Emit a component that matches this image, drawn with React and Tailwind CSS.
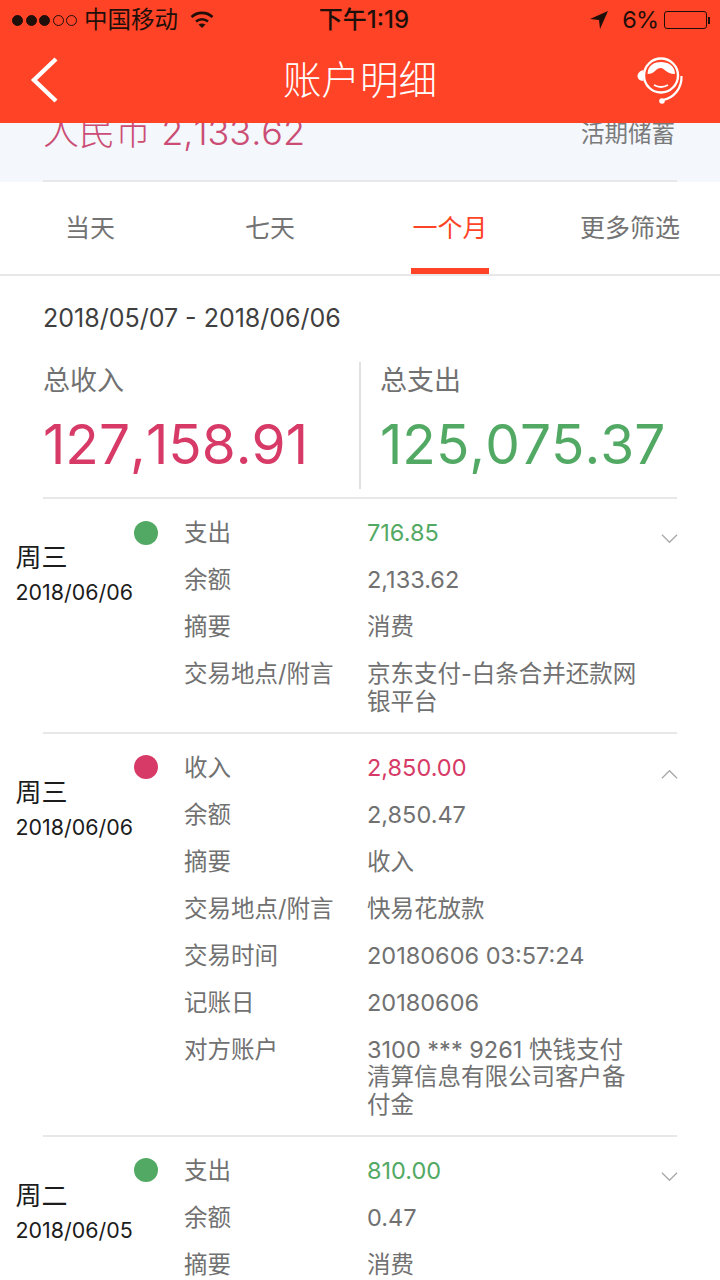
const FONT = "font-['Inter','Noto_Sans_CJK_SC',sans-serif]";

function Chevron({ up }) {
  return (
    <svg width="17" height="10" viewBox="0 0 18 10" className="block" fill="none" stroke="#a8a8a8" strokeWidth="1.3">
      {up ? <path d="M1 9.5 L9 1.5 L17 9.5" /> : <path d="M1 .5 L9 8.5 L17 .5" />}
    </svg>
  );
}

function Row({ day, date, color, rows, up, last }) {
  return (
    <div className={`flex ${last ? "" : "pb-[16.5px]"} pt-[20px]`}>
      <div className="w-[184px] shrink-0 flex pl-[15.5px]">
        <div className="w-[118.5px] shrink-0 mt-[22px] text-[#1c1c1c]">
          <div className="text-[26px] leading-[34px]">{day}</div>
          <div className="text-[21.4px] leading-[34px] whitespace-nowrap">{date}</div>
        </div>
        <div className="w-6 h-6 rounded-full mt-[1.5px]" style={{ background: color === "g" ? "#52a964" : "#d73a66" }} />
      </div>
      <div className="flex-1 flex flex-col gap-[19.5px]">
        {rows.map(([k, v, hl], i) => (
          <div key={i} className="flex text-[23.5px] leading-[27.5px] text-[#717171]">
            <div className="w-[183px] shrink-0 whitespace-nowrap">{k}</div>
            <div className={`w-[274px] ${hl ? (color === "g" ? "text-[#52a964]" : "text-[#d73a66]") : ""}`}>{v}</div>
          </div>
        ))}
      </div>
      <div className="w-[59px] shrink-0 pt-[15px]"><Chevron up={up} /></div>
    </div>
  );
}

function Divider() {
  return <div className="mx-[43px] h-0.5 bg-[#e8e8e8]" />;
}

export default function App() {
  return (
    <div className={`w-[720px] h-[1280px] overflow-hidden bg-white ${FONT}`}>
      <div className="h-[123px] bg-[#ff4326]">
        <div className="h-10 flex items-center text-[#1f0f0a] text-[23.5px] pl-3 pr-[10px]">
          <div className="flex-1 flex items-center">
            <div className="flex items-center gap-[2.5px]">
              {[1, 1, 1, 0, 0].map((f, i) => (
                <span key={i} className={`w-[11px] h-[11px] rounded-full border border-[#1f0f0a] ${f ? "bg-[#1f0f0a]" : ""}`} />
              ))}
            </div>
            <span className="ml-[7px]">中国移动</span>
            <svg className="ml-[12px]" width="24" height="18" viewBox="0 0 24 18" fill="none" stroke="#1f0f0a" strokeWidth="2.6">
              <path d="M1.5 6 C7.5 .5 16.5 .5 22.5 6" />
              <path d="M6 10.5 C9.5 7.5 14.5 7.5 18 10.5" />
              <path d="M12 17 L8.5 13.5 C10.5 12 13.5 12 15.5 13.5 Z" fill="#1f0f0a" stroke="none" />
            </svg>
          </div>
          <span className="font-medium ml-[6px] text-[24px]">下午1:19</span>
          <div className="flex-1 flex items-center justify-end">
            <svg width="20" height="20" viewBox="0 0 20 20"><path d="M19 1 L1 9 L10 10 L11 19 Z" fill="#1f0f0a" /></svg>
            <span className="ml-[13px] tracking-[-1px]">6%</span>
            <div className="ml-[6px] w-[43px] h-[18px] rounded-[3px] border border-[#1f0f0a]" />
            <div className="w-[2px] h-[7px] bg-[#1f0f0a] ml-[1px]" />
          </div>
        </div>
        <div className="h-[83px] flex items-center justify-between px-[30px] pb-[3px]">
          <div className="w-[60px]">
            <svg width="28" height="46" viewBox="0 0 28 46" fill="none" stroke="#fff" strokeWidth="4.4" className="block"><path d="M26 2 L4 23 L26 44" /></svg>
          </div>
          <span className="text-[38.5px] leading-none text-white font-light">账户明细</span>
          <svg width="60" height="60" viewBox="0 0 60 60" fill="none" className="block">
            <circle cx="31" cy="25.5" r="17" stroke="#fff" strokeWidth="2.4" />
            <path d="M17.5 24 C18 14.5 25 12 31 12 C38 12 45 15.5 45 24 C40 24 37 22 34 19.5 C31 17 28 18 25 21 C23 23 21 24 17.5 24 Z" fill="#fff" />
            <path d="M13.5 20 C9 21 7.5 24 7.5 26 C7.5 28 9 31 13.5 31 Z" fill="#fff" />
            <path d="M24 35 Q31 39 38 35" stroke="#fff" strokeWidth="2" />
            <path d="M51.5 26 C52 38 44 48 33 50" stroke="#fff" strokeWidth="2.2" />
            <circle cx="32" cy="51" r="2.8" fill="#fff" />
          </svg>
        </div>
      </div>
      <div className="h-[59px] bg-[#f4f7fb] overflow-hidden px-[43px]">
        <div className="h-[57px] flex justify-between items-start">
          <span className="text-[36px] leading-[40px] -mt-[11px] text-[#cb4d75] font-light [font-kerning:none]">人民币 2,133.62</span>
          <span className="text-[23.5px] leading-[28px] -mt-[3px] pr-[2px] text-[#7b7b7b]">活期储蓄</span>
        </div>
        <div className="h-0.5 bg-[#e6e8ea]" />
      </div>
      <div className="h-[94px] flex border-b-2 border-[#e8e8e8] text-[25px] text-[#737373]">
        {["当天", "七天", "一个月", "更多筛选"].map((t, i) => (
          <div key={t} className={`w-[180px] flex items-center justify-center relative pt-[2px] ${i === 2 ? "text-[#ff4326]" : ""}`}>
            {t}
            {i === 2 && <div className="absolute bottom-0 left-[51px] w-[78px] h-[6px] bg-[#ff4326]" />}
          </div>
        ))}
      </div>
      <div className="px-[43px] pt-[27px] text-[25px] leading-[30px] text-[#3f3f3f]">2018/05/07 - 2018/06/06</div>
      <div className="mx-[43px] mt-[29px] flex h-[127px]">
        <div className="w-[318px] border-r-2 border-[#e0e0e0]">
          <div className="text-[27px] leading-[34px] text-[#717171] pt-[2px] box-content">总收入</div>
          <div className="mt-[16px] text-[55px] leading-[60px] text-[#d73a66] [font-kerning:none]">127,158.91</div>
        </div>
        <div className="pl-[19px]">
          <div className="text-[27px] leading-[34px] text-[#717171] pt-[2px] box-content">总支出</div>
          <div className="mt-[16px] text-[55px] leading-[60px] text-[#52a964] [font-kerning:none]">125,075.37</div>
        </div>
      </div>
      <div className="mt-[8px]"><Divider /></div>
      <Row day="周三" date="2018/06/06" color="g" rows={[["支出", "716.85", 1], ["余额", "2,133.62"], ["摘要", "消费"], ["交易地点/附言", "京东支付-白条合并还款网银平台"]]} />
      <Divider />
      <Row day="周三" date="2018/06/06" color="r" up rows={[["收入", "2,850.00", 1], ["余额", "2,850.47"], ["摘要", "收入"], ["交易地点/附言", "快易花放款"], ["交易时间", "20180606 03:57:24"], ["记账日", "20180606"], ["对方账户", "3100 *** 9261 快钱支付清算信息有限公司客户备付金"]]} />
      <Divider />
      <Row day="周二" date="2018/06/05" color="g" last rows={[["支出", "810.00", 1], ["余额", "0.47"], ["摘要", "消费"]]} />
    </div>
  );
}
